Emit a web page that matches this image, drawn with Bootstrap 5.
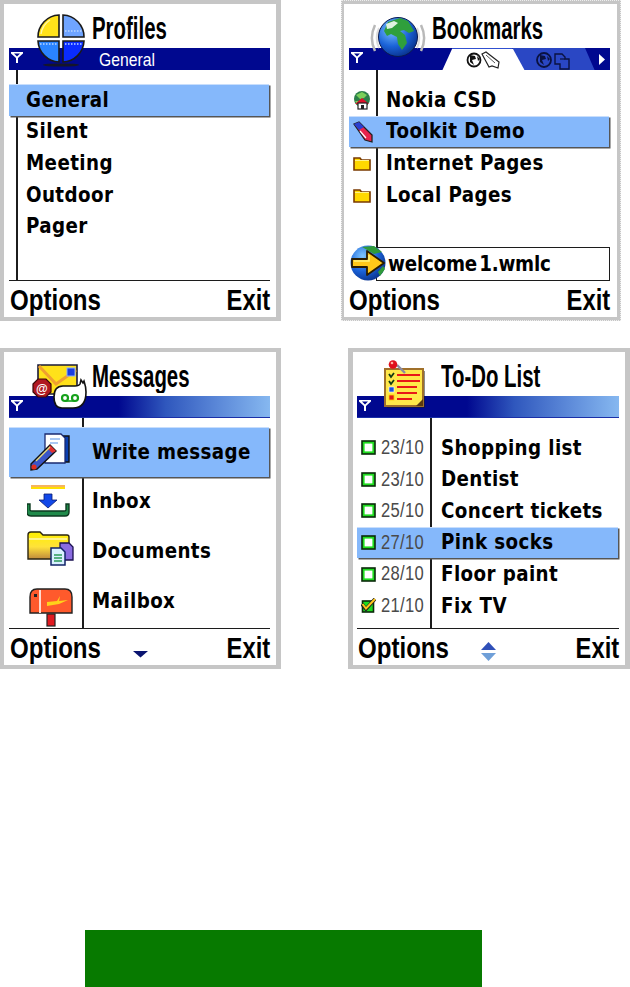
<!DOCTYPE html>
<html lang="en">
<head>
<meta charset="utf-8">
<title>Phone screens</title>
<link href="https://cdn.jsdelivr.net/npm/bootstrap@5.3.0/dist/css/bootstrap.min.css" rel="stylesheet">
<style>
html,body{margin:0;background:#fff;}
body{width:630px;height:987px;overflow:hidden;color:#000;}
.shots{display:flex;}
.shots-low{margin-top:27px;}
.phn{width:281px;height:321px;background:#fff;border:solid #c6c6c6;border-width:4px 5px 4px 4px;--ml:5px;--mr:6px;--line:7px;--gap:14px;position:relative;flex:none;}
.phn-b{margin-left:60px;width:280px;border-width:4px 4px 4px 3px;--mr:7px;--line:27px;outline:1px dotted #eee;outline-offset:-1px;}
.phn-c{--line:73px;--gap:9px;}
.phn-d{margin-left:67px;width:282px;border-width:4px 5px 4px 5px;--ml:4px;--line:73px;}
.phn-head{height:43.5px;position:relative;}
.ttl{position:absolute;top:5px;font:700 25.5px/30px "Liberation Sans",sans-serif;transform:scale(.8,1.24);transform-origin:left top;white-space:nowrap;}
.ttl-a{left:88px;}.ttl-b{left:88px;}.ttl-c{left:88px;}.ttl-d{left:88px;}
.phn-bar{height:22.5px;margin:0 var(--mr) 0 var(--ml);background:#00088f;position:relative;color:#fff;overflow:hidden;}
.bar-fade{background:linear-gradient(90deg,#00088f 0,#00088f 42%,#2f57bd 60%,#5b88d8 80%,#86b8f0 100%);box-shadow:inset 0 -1px 0 #1a2fa8;}
.bar-txt{position:absolute;left:90px;top:0;font:400 18.5px/23px "Liberation Sans",sans-serif;transform:scaleX(.85);transform-origin:left center;}
.ant{position:absolute;left:2px;top:3px;}
.bar-art{position:absolute;left:0;top:0;}
.phn-main{height:211px;margin:0 var(--mr) 0 var(--ml);position:relative;border-bottom:1.5px solid #1c1c1c;padding-top:var(--gap);}
.phn-main::before{content:"";position:absolute;left:var(--line);top:0;bottom:0;width:1.7px;background:#1c1c1c;}
.phn-main-box{border-bottom:0;}
.rw{display:flex;align-items:center;height:31.7px;margin-right:1px;position:relative;font:700 18.3px/1 "DejaVu Sans",sans-serif;letter-spacing:.4px;white-space:nowrap;}
.lbl{display:inline-block;transform:scaleY(1.14);}
.rw-wide{height:49.7px;}
.rw-tall{height:31.6px;}
.pick{background:#85b8fb;box-shadow:1.5px 1.5px 0 #555,inset 0 1px 0 #c8defc;}
.lead-a{width:17px;flex:none;}
.lead-b{width:37px;flex:none;padding-left:4px;display:flex;align-items:center;}
.lead-c{width:83px;flex:none;display:flex;justify-content:center;align-items:center;}
.lead-d{width:84px;flex:none;display:flex;align-items:center;padding-left:4px;gap:5px;font:400 19.5px/1 "Liberation Sans",sans-serif;color:#4a4a4a;}
.dt{display:inline-block;transform:scaleX(.85);transform-origin:left center;}
.urlbox{position:absolute;left:27px;right:0;bottom:0;height:34px;border:1.5px solid #1c1c1c;background:#fff;padding-left:11px;display:flex;align-items:center;font:700 18.3px/1 "DejaVu Sans",sans-serif;letter-spacing:-.2px;word-spacing:-4px;}
.urlglobe{position:absolute;left:1px;bottom:-1px;}
.keys{height:36px;display:flex;align-items:center;padding:3px 6px 0;font:700 29px/33px "Liberation Sans",sans-serif;}
.keys-d{padding-left:5px;}
.keys-b{padding-left:5px;padding-right:7px;}
.key-l{display:inline-block;width:90px;transform:scaleX(.83);transform-origin:left center;white-space:nowrap;}
.key-r{margin-left:auto;display:inline-block;transform:scaleX(.82);transform-origin:right center;}
.pager{margin-left:33px;margin-top:5px;}
.pager-dn{margin-left:33px;margin-top:11px;}
.hero{position:absolute;}
.hero-a{left:32px;top:9px;}
.hero-b{left:24px;top:9px;}
.hero-c{left:28px;top:8px;}
.hero-d{left:27px;top:8px;}
.ico-flip{margin-left:-3px;}
.strip{width:397px;height:57px;margin:261px 0 0 85px;background:#077a00;}
</style>
</head>
<body>
<svg width="0" height="0" class="position-absolute">
<defs>
<radialGradient id="gl" cx=".35" cy=".3" r=".8"><stop offset="0" stop-color="#7ec6ff"/><stop offset=".55" stop-color="#1a62d8"/><stop offset="1" stop-color="#062a80"/></radialGradient>
<linearGradient id="fo" x1="0" y1="0" x2="0" y2="1"><stop offset="0" stop-color="#fff000"/><stop offset=".55" stop-color="#ffe23a"/><stop offset="1" stop-color="#c08a3c"/></linearGradient>
<symbol id="antenna" viewBox="0 0 12 13"><path fill-rule="evenodd" d="M0 1h12v1.5L7 7v5H5V7L0 2.500zM3 2.500l3 3 3-3z" fill="#fff"/></symbol>
<symbol id="box" viewBox="0 0 15 15"><rect x="1" y="1" width="13" height="13" fill="#1fdc1f" stroke="#0a2a0a" stroke-width="1.6"/><rect x="3.6" y="3.6" width="7.800" height="7.800" fill="#fff"/></symbol>
<symbol id="fold" viewBox="0 0 18 16"><path d="M1 3h6l1.500 2H17v10H1z" fill="#ffd800" stroke="#7a3a00" stroke-width="1.600"/><path d="M2 5.500h14" stroke="#fff38a" stroke-width="1"/></symbol>
</defs>
</svg>

<div class="shots">
  <section class="phn">
    <div class="phn-head"><div class="ttl ttl-a">Profiles</div></div>
    <div class="phn-bar"><svg class="ant" width="12" height="13"><use href="#antenna"/></svg><span class="bar-txt">General</span></div>
    <div class="phn-main">
      <div class="rw pick"><span class="lead-a"></span><span class="lbl">General</span></div>
      <div class="rw"><span class="lead-a"></span><span class="lbl">Silent</span></div>
      <div class="rw"><span class="lead-a"></span><span class="lbl">Meeting</span></div>
      <div class="rw"><span class="lead-a"></span><span class="lbl">Outdoor</span></div>
      <div class="rw"><span class="lead-a"></span><span class="lbl">Pager</span></div>
    </div>
    <div class="keys"><span class="key-l">Options</span><span class="key-r">Exit</span></div>
    <svg class="hero hero-a" width="50" height="56" viewBox="0 0 50 56">
      <ellipse cx="25" cy="52" rx="18" ry="1.600" fill="#15152a"/>
      <g stroke="#1a1a1a" stroke-width="1.600">
        <path d="M23 24H2A22 22 0 0 1 23 2Z" fill="#ffe21a"/>
        <path d="M27 24V2A22 22 0 0 1 48 24Z" fill="#6fa4ff"/>
        <path d="M23 28V49A22 22 0 0 1 2 28Z" fill="#2a84ff"/>
        <path d="M27 28H48A22 22 0 0 1 27 49Z" fill="#0a2cff"/>
      </g>
      <path d="M5 21A20 20 0 0 1 14 7" stroke="#fff7a8" stroke-width="1.400" fill="none"/>
      <path d="M29 18H46M4 31H21M29 31H46" stroke="#bcd6ff" stroke-width="1.300" stroke-dasharray="1.500 1.500"/>
    </svg>
  </section>

  <section class="phn phn-b">
    <div class="phn-head"><div class="ttl ttl-b">Bookmarks</div></div>
    <div class="phn-bar">
      <svg class="ant" width="12" height="13"><use href="#antenna"/></svg>
      <svg class="bar-art" width="261" height="23" viewBox="0 0 261 23">
        <path d="M163 0H236L246 23H175Z" fill="#2a47c4"/>
        <path d="M93 23L103 1H164L176 23Z" fill="#fff"/>
        <path d="M103 .5H163" stroke="#3050d0" stroke-width="1.200"/>
        <path d="M250 6l6 5.500-6 5.500z" fill="#fff"/>
        <circle cx="125" cy="12" r="6.500" fill="#fff" stroke="#111" stroke-width="1.800"/>
        <path d="M121 7l5 1 1 3-4 1 2 5-4-3zM128 8l3 3-2 2z" fill="#111"/>
        <path d="M133 6l4-2 13 10-1 6-6-2-3 1z" fill="#fff" stroke="#222" stroke-width="1.200"/>
        <path d="M137 7l9 8" stroke="#555" stroke-width="1"/>
        <circle cx="195" cy="12" r="7" fill="#2a47c4" stroke="#0a1240" stroke-width="1.800"/>
        <path d="M191 7l5 1 1 3-4 1 2 5-4-3zM198 8l3 3-2 2z" fill="#0a1240"/>
        <path d="M206 6h7l3 3v2h4v10h-9v-5h-5z" fill="none" stroke="#0a1240" stroke-width="1.400"/>
        <path d="M211 11h5" stroke="#0a1240" stroke-width="1.200"/>
      </svg>
    </div>
    <div class="phn-main phn-main-box">
      <div class="rw"><span class="lead-b">
        <svg width="19" height="20" viewBox="0 0 19 20"><circle cx="9" cy="9" r="8" fill="#2b7f4a"/><path d="M3 5l6-3 5 3-3 3-4 1zM2 11l3 0 1 4-2-1z" fill="#7bcf5a"/><path d="M9 8l7 6H2z" fill="#e0102a"/><rect x="5" y="13" width="9" height="6" fill="#fff" stroke="#222" stroke-width="1.200"/><rect x="8" y="15" width="3" height="4" fill="#222"/></svg>
      </span><span class="lbl">Nokia CSD</span></div>
      <div class="rw pick"><span class="lead-b">
        <svg width="24" height="24" viewBox="0 0 24 24" class="ico-flip"><path d="M4 4l5-2 13 13 0 7-7-2z" fill="#e8244c" stroke="#222" stroke-width="1.300"/><path d="M4 4l5-2 5 5-5 3z" fill="#2a3fd0"/><path d="M10 11l6 7" stroke="#fff" stroke-width="1.200"/></svg>
      </span><span class="lbl">Toolkit Demo</span></div>
      <div class="rw"><span class="lead-b"><svg width="18" height="16"><use href="#fold"/></svg></span><span class="lbl">Internet Pages</span></div>
      <div class="rw"><span class="lead-b"><svg width="18" height="16"><use href="#fold"/></svg></span><span class="lbl">Local Pages</span></div>
      <div class="urlbox"><span class="lbl">welcome 1.wmlc</span></div>
      <svg class="urlglobe" width="37" height="38" viewBox="0 0 37 38">
        <circle cx="18" cy="19" r="17.500" fill="url(#gl)"/>
        <path d="M12 3l12-1 8 6-8 2-5-3zM28 28l5-6 2 3-5 7z" fill="#2f9a3a"/>
        <path d="M2 15H17V7L34 19 17 31V23H2Z" fill="#ffc81a" stroke="#2a1c00" stroke-width="1.800" stroke-linejoin="round"/>
        <path d="M4 17H19V11" stroke="#fff27a" stroke-width="1.600" fill="none"/>
      </svg>
    </div>
    <div class="keys keys-b"><span class="key-l">Options</span><span class="key-r">Exit</span></div>
    <svg class="hero hero-b" width="60" height="56" viewBox="0 0 60 56">
      <path d="M7 12A30 30 0 0 0 7 38M53 12A30 30 0 0 1 53 38" stroke="#b9b9b9" stroke-width="2.500" fill="none"/>
      <path d="M11 15A24 24 0 0 0 11 35M49 15A24 24 0 0 1 49 35" stroke="#dcdcdc" stroke-width="2" fill="none"/>
      <circle cx="30" cy="24" r="19.500" fill="url(#gl)" stroke="#0a1a50" stroke-width="1"/>
      <path d="M20 9l12-4 8 3 6 10-5 2-5-3-4 1 5 4 2 8-5 7-4-6-1-7-6-3-4 2-3-5z" fill="#2f9f3c"/>
      <path d="M18 11l8-3 4 2-6 5-5 1z" fill="#dff2e0"/>
    </svg>
  </section>
</div>

<div class="shots shots-low">
  <section class="phn phn-c">
    <div class="phn-head"><div class="ttl ttl-c">Messages</div></div>
    <div class="phn-bar bar-fade"><svg class="ant" width="12" height="13"><use href="#antenna"/></svg></div>
    <div class="phn-main">
      <div class="rw rw-wide pick"><span class="lead-c">
        <svg width="44" height="38" viewBox="0 0 44 38"><path d="M22 3h18v26H26z" fill="#0a3fb0" stroke="#111" stroke-width="1.400"/><path d="M16 1h16l4 4v25H16z" fill="#fff" stroke="#1a2a70" stroke-width="1.300"/><path d="M21 6h10M21 10h8" stroke="#8fb6f0" stroke-width="1.600"/><path d="M2 31l19-19 6 6L8 36l-6 1z" fill="#3a56c8" stroke="#111" stroke-width="1.400"/><path d="M21 12l6 6-4 2-4-4z" fill="#e03030"/><circle cx="5" cy="34" r="2.600" fill="#e03020"/><path d="M7 28l14-14" stroke="#f0e070" stroke-width="1.300"/></svg>
      </span><span class="lbl">Write message</span></div>
      <div class="rw rw-wide"><span class="lead-c">
        <svg width="48" height="34" viewBox="3 0 48 34"><path d="M7 1h34" stroke="#f29a2c" stroke-width="1.600"/><path d="M7 3h34" stroke="#ffe000" stroke-width="1.800"/><path d="M20 9h8v6h5L24 23 15 15h5z" fill="#1248e8" stroke="#0a1a70" stroke-width=".8"/><path d="M3 19v8q0 4 4 4h34q4 0 4-4v-8h-3v6q0 1-2 1H8q-2 0-2-1v-6z" fill="#1f8a4a" stroke="#0d3a20" stroke-width="1.400"/></svg>
      </span><span class="lbl">Inbox</span></div>
      <div class="rw rw-wide"><span class="lead-c">
        <svg width="50" height="42" viewBox="0 0 50 42"><path d="M2 5q0-3 3-3h9l3 3h24q2 0 2 2v22H2z" fill="url(#fo)" stroke="#2a2410" stroke-width="1.400"/><path d="M3 9h38" stroke="#fff" stroke-width="1"/><path d="M34 13h9l4 4v13h-13z" fill="#8a6ce0" stroke="#1a1050" stroke-width="1.300"/><path d="M25 18h10l4 4v13H25z" fill="#d9f0ff" stroke="#12246a" stroke-width="1.500"/><path d="M28 25h8M28 28h8M28 31h8" stroke="#2c9a5a" stroke-width="1.300"/></svg>
      </span><span class="lbl">Documents</span></div>
      <div class="rw rw-wide"><span class="lead-c">
        <svg width="44" height="52" viewBox="0 -12 44 52"><path d="M8 2H36Q43 2 43 10V26H1V10Q1 2 8 2Z" fill="#ff5a2c" stroke="#222" stroke-width="1.400"/><path d="M11 3V26" stroke="#ffd9cc" stroke-width="2"/><rect x="5" y="7" width="3" height="3" fill="#222"/><path d="M18 15l10-1 3-5-1 5 9-1-9 4-12 2z" fill="#ffd21a"/><rect x="18" y="27" width="8" height="12" fill="#e01a20" stroke="#222" stroke-width="1.200"/></svg>
      </span><span class="lbl">Mailbox</span></div>
    </div>
    <div class="keys"><span class="key-l">Options</span>
      <svg class="pager-dn" width="15" height="7" viewBox="0 0 15 7"><path d="M0 0H15L7.500 6.500Z" fill="#0a1470"/></svg>
      <span class="key-r">Exit</span></div>
    <svg class="hero hero-c" width="58" height="54" viewBox="0 0 58 54">
      <path d="M6 5H45V28L38 34H6Z" fill="#ffe11a" stroke="#1a1a3a" stroke-width="1.600"/>
      <path d="M7 6L24 24 44 10" stroke="#f0a030" stroke-width="3" fill="none"/>
      <rect x="35" y="8" width="8" height="8" fill="#1a3ce0" stroke="#8cb0ff" stroke-width="1"/>
      <path d="M1 24l5-5h8l5 5v8l-5 5H6l-5-5z" fill="#b01820" stroke="#3a0808" stroke-width="1.200"/>
      <text x="4" y="33" font-family="Liberation Sans,sans-serif" font-size="12" font-weight="700" fill="#fff">@</text>
      <path d="M31 26h12q4 0 5-2l1-4 2 3 1-2q2 6 2 11 0 16-13 16H30q-8 0-8-11t9-11z" fill="#fff" stroke="#111" stroke-width="1.600"/>
      <circle cx="33" cy="38" r="3" fill="none" stroke="#15a01a" stroke-width="2.200"/>
      <circle cx="43" cy="38" r="3" fill="none" stroke="#15a01a" stroke-width="2.200"/>
      <path d="M33 41h10" stroke="#15a01a" stroke-width="1.600"/>
    </svg>
  </section>

  <section class="phn phn-d">
    <div class="phn-head"><div class="ttl ttl-d">To-Do List</div></div>
    <div class="phn-bar bar-fade"><svg class="ant" width="12" height="13"><use href="#antenna"/></svg></div>
    <div class="phn-main">
      <div class="rw rw-tall"><span class="lead-d"><svg width="15" height="15"><use href="#box"/></svg><span class="dt">23/10</span></span><span class="lbl">Shopping list</span></div>
      <div class="rw rw-tall"><span class="lead-d"><svg width="15" height="15"><use href="#box"/></svg><span class="dt">23/10</span></span><span class="lbl">Dentist</span></div>
      <div class="rw rw-tall"><span class="lead-d"><svg width="15" height="15"><use href="#box"/></svg><span class="dt">25/10</span></span><span class="lbl">Concert tickets</span></div>
      <div class="rw rw-tall pick"><span class="lead-d"><svg width="15" height="15"><use href="#box"/></svg><span class="dt">27/10</span></span><span class="lbl">Pink socks</span></div>
      <div class="rw rw-tall"><span class="lead-d"><svg width="15" height="15"><use href="#box"/></svg><span class="dt">28/10</span></span><span class="lbl">Floor paint</span></div>
      <div class="rw rw-tall"><span class="lead-d"><svg width="15" height="15" viewBox="0 0 15 15"><rect x="1.500" y="3" width="11" height="11" fill="#1fdc1f" stroke="#0a2a0a" stroke-width="1.600"/><path d="M1 6l4 5 9-10" stroke="#222" stroke-width="3.600" fill="none"/><path d="M1.500 6l3.500 4.500L14 1" stroke="#ffc81a" stroke-width="2" fill="none"/></svg><span class="dt">21/10</span></span><span class="lbl">Fix TV</span></div>
    </div>
    <div class="keys keys-d"><span class="key-l">Options</span>
      <svg class="pager" width="15" height="19" viewBox="0 0 15 19"><path d="M7.500 0L15 8H0Z" fill="#2f4fb8"/><path d="M0 11H15L7.500 19Z" fill="#6f9fd8"/></svg>
      <span class="key-r">Exit</span></div>
    <svg class="hero hero-d" width="46" height="50" viewBox="0 0 46 50">
      <rect x="7" y="11" width="38" height="37" fill="#1a1a1a" opacity=".5"/>
      <rect x="5" y="9" width="38" height="37" fill="#ffe84a" stroke="#a0702a" stroke-width="2"/>
      <path d="M36 46l7-7v7z" fill="#5a3a10"/>
      <path d="M17 15h23M17 21h23M17 27h20M17 33h20M17 39h15" stroke="#e81818" stroke-width="2"/>
      <path d="M9 14l2 3 3-4M9 21l2 3 3-4" stroke="#123a12" stroke-width="1.800" fill="none"/>
      <rect x="9" y="27" width="5" height="5" fill="#1a50e0" stroke="#fff" stroke-width=".6"/>
      <rect x="9" y="35" width="5" height="5" fill="#e01a1a" stroke="#ffd000" stroke-width=".8"/>
      <path d="M17 5l8 8" stroke="#8a8aa0" stroke-width="2.400"/>
      <circle cx="13" cy="4.500" r="4.300" fill="#e0101c"/>
      <circle cx="12" cy="3" r="1.300" fill="#ffb0a0"/>
    </svg>
  </section>
</div>

<div class="strip"></div>
<script src="https://cdn.jsdelivr.net/npm/bootstrap@5.3.0/dist/js/bootstrap.bundle.min.js"></script>
</body>
</html>
